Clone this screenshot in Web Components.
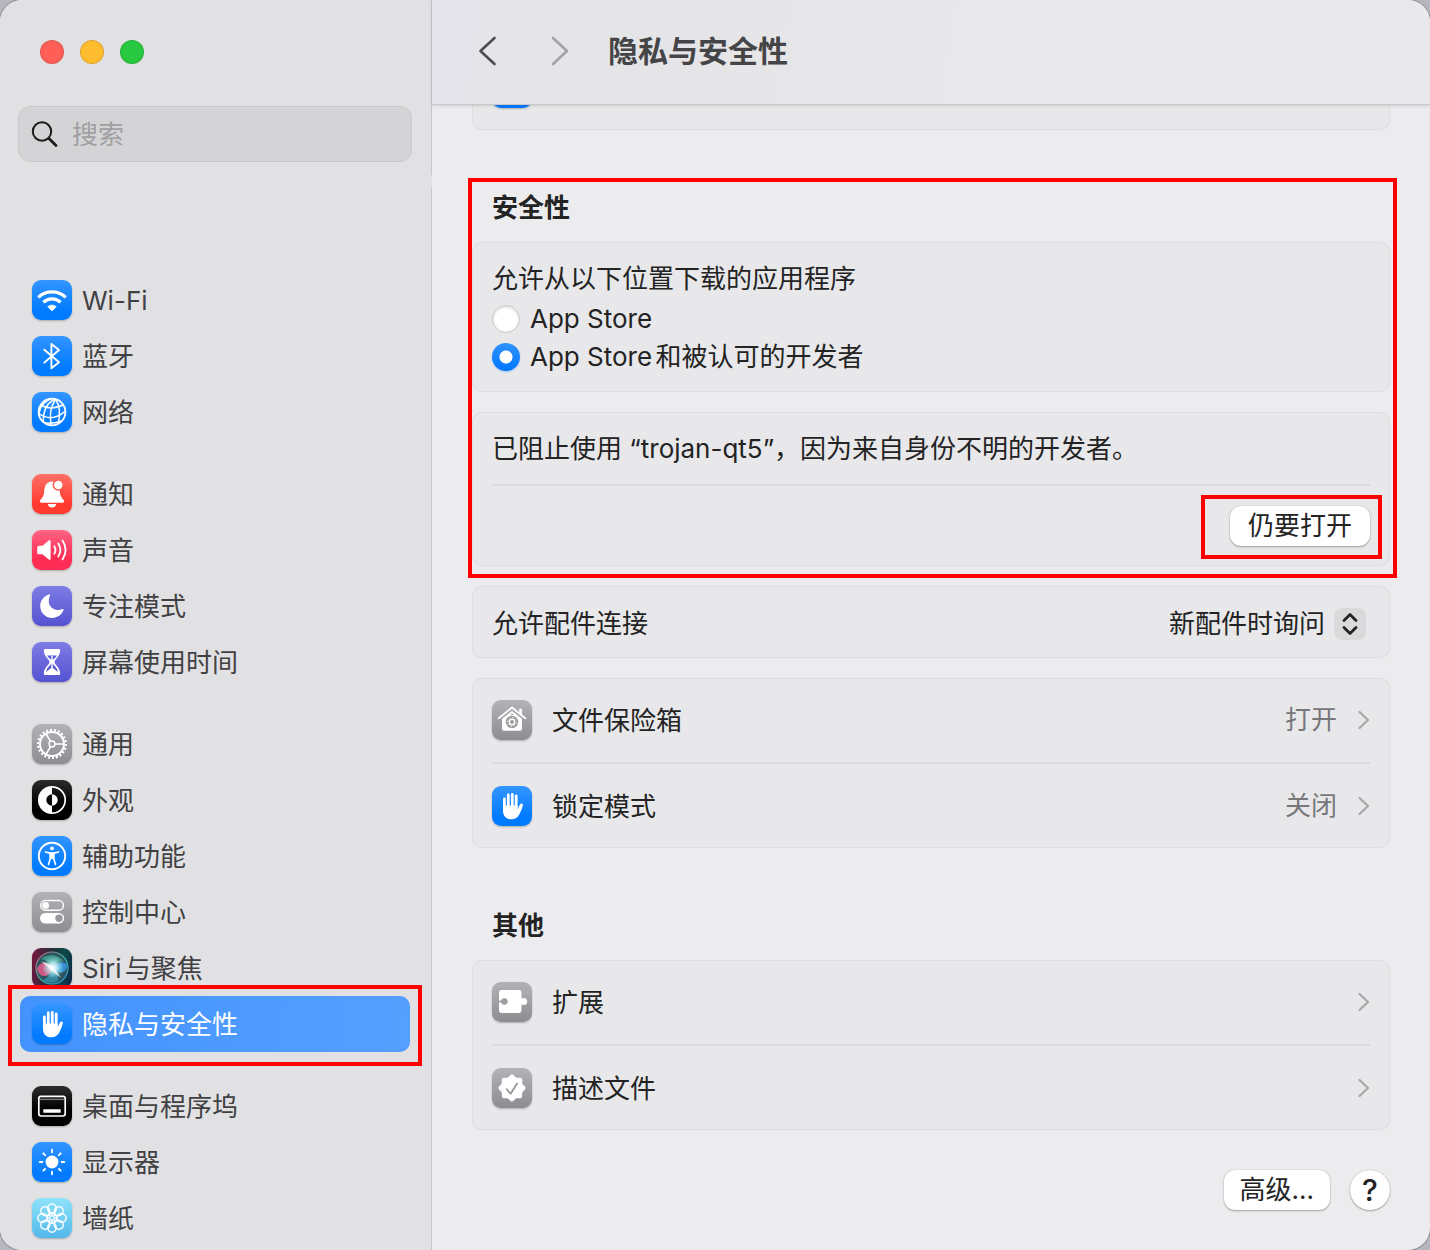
<!DOCTYPE html>
<html lang="zh-CN">
<head>
<meta charset="utf-8">
<meta name="viewport" content="width=device-width, initial-scale=1">
<title>隐私与安全性</title>
<style>
    body {
        margin: 0;
        background: #b6b6be;
        font-family: Inter, "Noto Sans CJK SC", sans-serif;
        font-size: 26px;
        line-height: 36px;
        text-autospace: normal;
        color: #232324;
    }
</style>
</head>
<body>
<settings-window>
    <settings-sidebar slot="sidebar">
        <sidebar-group>
            <sidebar-item icon="wifi">Wi-Fi</sidebar-item>
            <sidebar-item icon="bluetooth">蓝牙</sidebar-item>
            <sidebar-item icon="network">网络</sidebar-item>
        </sidebar-group>
        <sidebar-group>
            <sidebar-item icon="bell">通知</sidebar-item>
            <sidebar-item icon="sound">声音</sidebar-item>
            <sidebar-item icon="moon">专注模式</sidebar-item>
            <sidebar-item icon="hourglass">屏幕使用时间</sidebar-item>
        </sidebar-group>
        <sidebar-group>
            <sidebar-item icon="gear">通用</sidebar-item>
            <sidebar-item icon="appearance">外观</sidebar-item>
            <sidebar-item icon="accessibility">辅助功能</sidebar-item>
            <sidebar-item icon="toggles">控制中心</sidebar-item>
            <sidebar-item icon="siri">Siri与聚焦</sidebar-item>
            <mark-frame style="--mark-inset: -11px -12px -14px">
                <sidebar-item icon="hand" selected>隐私与安全性</sidebar-item>
            </mark-frame>
        </sidebar-group>
        <sidebar-group>
            <sidebar-item icon="dock">桌面与程序坞</sidebar-item>
            <sidebar-item icon="display">显示器</sidebar-item>
            <sidebar-item icon="wallpaper">墙纸</sidebar-item>
        </sidebar-group>
    </settings-sidebar>

    <title-bar slot="toolbar">隐私与安全性</title-bar>

    <clipped-card icon="hand"></clipped-card>

    <mark-frame style="--mark-inset: 48px -7px -12px -4px">
        <section-title>安全性</section-title>
        <card-stack>
            <download-source></download-source>
            <settings-card>
                <settings-row plain>已阻止使用 “trojan-qt5”，因为来自身份不明的开发者。</settings-row>
                <settings-row plain tall>
                    <mark-frame slot="value" style="--mark-inset: -11px -12px -13px -29px">
                        <push-button>仍要打开</push-button>
                    </mark-frame>
                </settings-row>
            </settings-card>
        </card-stack>
    </mark-frame>

    <card-stack class="after">
        <accessory-card></accessory-card>
        <settings-card>
            <settings-row icon="vault" link>文件保险箱<span slot="value">打开</span></settings-row>
            <settings-row icon="hand" link>锁定模式<span slot="value">关闭</span></settings-row>
        </settings-card>
    </card-stack>

    <section-title>其他</section-title>
    <settings-card>
        <settings-row icon="puzzle" link>扩展</settings-row>
        <settings-row icon="seal" link>描述文件</settings-row>
    </settings-card>

    <footer-bar>
        <push-button>高级…</push-button>
        <push-button round label="帮助">?</push-button>
    </footer-bar>
</settings-window>

<script>
const BLUE = 'linear-gradient(#3395ff, #007aff 80%)';
const GRAY = 'linear-gradient(#b2b2b7, #8c8c91)';
const BLACK = 'linear-gradient(#2c2c2c, #000 60%)';
const INDIGO = 'linear-gradient(#7e7ce6, #5552d0)';

const rays = (n, draw) => Array.from({ length: n }, (_, i) =>
    `<g transform="rotate(${i * 360 / n} 20 20)">${draw}</g>`).join('');

// every glyph is drawn on a 40x40 tile, white by default
const ICONS = {
    wifi: [BLUE, `
        <g fill="none" stroke="#fff" stroke-width="3.3"><path d="M6.3 17.4A20 20 0 0 1 33.7 17.4"/><path d="M11.4 22.3A12.6 12.6 0 0 1 28.6 22.3"/></g>
        <path d="M20 31l-4.3-4.3A6.4 6.4 0 0 1 24.3 26.7z" stroke="#fff" stroke-linejoin="round" stroke-width=".6"/>`],
    bluetooth: [BLUE, `<path d="M12.3 13.7L27 26.3l-7.6 6V7.9L27 14 12.3 26.6" fill="none" stroke="#fff" stroke-width="1.9" stroke-linejoin="round" stroke-linecap="round"/>`],
    network: [BLUE, `
        <g fill="none" stroke="#fff" stroke-width="1.5"><circle cx="20" cy="20" r="13.4" stroke-width="1.8"/>
        <path d="M23.5 7Q11 12 11.3 30M23.5 7Q16 19 19.3 33.4M23.5 7Q30 17 26 32M20 6.6Q9 10 7 21M8.8 13Q18 19 31.5 12.8M6.8 21.5Q20 31 33.4 19M11 30Q19 33 29 29"/></g>`],
    bell: ['linear-gradient(#ff7067, #ff3b30 75%)', `
        <path d="M20 7.6C14 7.8 12.6 12.5 12.2 17.5c-.3 4.5-1.7 6-3.7 8.3-1.2 1.6-.6 2.9 1.1 2.9h20.8c1.7 0 2.3-1.3 1.1-2.9-2-2.3-3.4-3.8-3.7-8.3C27.4 12.5 26 7.8 20 7.6z"/>
        <path d="M16 30h8a4 3.4 0 0 1-8 0z"/>
        <circle cx="26.3" cy="11" r="5" stroke="#ff5f56" stroke-width="1.6"/>`],
    sound: ['linear-gradient(#ff6482, #ff2d55 70%)', `
        <path d="M5.2 17.6q0-1.9 1.9-1.9h3.4l6.3-5.3q1.8-1 1.8 1v17.2q0 2-1.8 1l-6.3-5.3H7.1q-1.9 0-1.9-1.9z"/>
        <path d="M22.3 16.2q2.3 3.8 0 7.6M26.3 13.5q4.2 6.5 0 13M30.5 10.6q6.2 9.4 0 18.8" fill="none" stroke="#fff" stroke-width="1.8" stroke-linecap="round"/>`],
    moon: [INDIGO, `<path d="M17 8.4C11.5 10.2 8.2 14.8 8.2 20a12 12 0 0 0 12 12c5.2 0 9.7-3.3 11.3-7.9.3-.9-.2-1.4-1-1C21.5 26.5 13.7 19.5 17.9 9.5c.3-.8-.1-1.3-.9-1.1z"/>`],
    hourglass: [INDIGO, `
        <path d="M13 7h14q1.400 0 1.200 1.700C27.500 15.500 22.500 17 22.500 20s5 4.500 5.700 11.300Q28.400 33 27 33H13q-1.400 0-1.200-1.700C12.500 24.500 17.500 23 17.500 20s-5-4.500-5.700-11.300Q11.600 7 13 7z"/>
        <path d="M15 13.5h10c-1 1.600-2.500 2.800-3.500 4h-3C17.500 16.300 16 15.100 15 13.500zM20 20.500c1.500 3 5 4.500 6 9.500l-6-4.500-6 4.500c1-5 4.500-6.500 6-9.500z" fill="#5f5cd6"/>
        <path d="M19.3 14h1.4v13h-1.4z"/>`],
    gear: [GRAY, `
        <g fill="none" stroke="#fff"><circle cx="20" cy="20" r="13.9" stroke-width="2.3" pathLength="44" stroke-dasharray="1 1"/>
        <circle cx="20" cy="20" r="12" stroke-width="1.9"/><circle cx="20" cy="20" r="2.9" stroke-width="1.5"/>
        <path d="M23 20h8.5M18.5 17.4L14.2 10M18.5 22.6L14.2 30" stroke-width="1.7"/></g>`],
    appearance: [BLACK, `
        <circle cx="20" cy="20" r="13.2" fill="none" stroke="#fff" stroke-width="1.7"/>
        <path d="M20 7a13 13 0 0 0 0 26v-7.3a5.7 5.7 0 0 1 0-11.4z"/><path d="M20 14.3a5.7 5.7 0 0 1 0 11.4z"/>`],
    accessibility: [BLUE, `
        <circle cx="20" cy="20" r="13.2" fill="none" stroke="#fff" stroke-width="1.9"/><circle cx="20" cy="12.3" r="1.9"/>
        <path d="M13.5 16l4.5 1.1h4L26.5 16M18.3 17.2v5.3L16.5 28.5M21.7 17.2v5.3l1.8 6" fill="none" stroke="#fff" stroke-width="1.6" stroke-linecap="round" stroke-linejoin="round"/><path d="M17.6 16.7h4.8v6.3h-4.8z"/>`],
    toggles: [GRAY, `
        <rect x="8.8" y="8.6" width="22.6" height="9.6" rx="4.8" fill="none" stroke="#fff" stroke-width="1.5"/><circle cx="13.7" cy="13.4" r="3.4"/>
        <rect x="8" y="21" width="24.2" height="10.6" rx="5.3"/><circle cx="27" cy="26.3" r="3.7" fill="#98989d"/>`],
    siri: ['linear-gradient(100deg, #7a1540, #1a3138 50%, #0d4a49 70%, #0f2447)', `
        <defs><radialGradient id="orb"><stop offset="0" stop-color="#fff"/><stop offset=".35" stop-color="#d5f6ff" stop-opacity=".85"/><stop offset="1" stop-color="#8fe" stop-opacity="0"/></radialGradient>
        <linearGradient id="ring" x1="0" y1="0" x2="1" y2="1"><stop offset="0" stop-color="#e8447c"/><stop offset=".5" stop-color="#39c0a0"/><stop offset="1" stop-color="#2f8cf0"/></linearGradient></defs>
        <circle cx="20" cy="20" r="16" fill="#2a5560" stroke="url(#ring)" stroke-width="1.2"/>
        <path d="M9 11c7-6 18-5 23 3-5-2-9 1-12 5-2-4-6-7-11-8z" fill="#4fae98" opacity=".75"/>
        <path d="M5 21c3-9 12-7 16-2-2 9-12 14-16 2z" fill="#ec5a8c" opacity=".85"/>
        <path d="M20 19c6-6 13-6 15-2 0 9-9 10-15 2z" fill="#3c9bf0" opacity=".8"/>
        <path d="M20 20c5 1 7 7 6 13-5 3-11 2-15-1 4-2 8-6 9-12z" fill="#3fa5c8" opacity=".6"/>
        <circle cx="21" cy="19.5" r="11" fill="url(#orb)"/>
        <path d="M9 13l12 5 8 12-10-8z" fill="#fff" opacity=".75"/>`],
    hand: [BLUE, `
        <path d="M12.4 13v9M16.3 9v11M20.3 8.3V20M24.2 9.8V21" stroke="#fff" stroke-width="2.8" stroke-linecap="round"/>
        <path d="M11 19.5h14.6V23l2.5-4.7c.8-1.5 3.2-1 2.7 1.1-.8 3.2-2 6-3.3 8.5-1.9 3.7-4.5 5.3-8.1 5.3-5.4 0-8.4-3.4-8.4-8.8z"/>`],
    dock: [BLACK, `
        <rect x="6.8" y="10.3" width="26.4" height="19.7" rx="2.2" fill="none" stroke="#fff" stroke-width="1.7"/>
        <path d="M8 13.3h24" stroke="#999" stroke-width="1"/><rect x="11.3" y="23.2" width="17.4" height="3.6" rx=".6"/>`],
    display: [BLUE, `<circle cx="20" cy="20" r="6.4"/>` + rays(8, '<path d="M20 7.7v2.6" stroke="#fff" stroke-width="1.9" stroke-linecap="round"/>')],
    wallpaper: ['linear-gradient(#8fe3fb, #52b7ea)', rays(8, '<ellipse cx="20" cy="10.6" rx="4.2" ry="4.8" fill="none" stroke="#fff" stroke-width="1.5"/><path d="M20 18.5V14" stroke="#fff" stroke-width="1.6"/>') + '<circle cx="20" cy="20" r="4.6" fill="none" stroke="#fff" stroke-width="1"/>'],
    vault: [GRAY, `
        <path d="M6.7 18.3L20 7.5l13.3 10.8" fill="none" stroke="#fff" stroke-width="1.8" stroke-linecap="round" stroke-linejoin="round"/>
        <path d="M27.2 8.8h2.7v7l-2.7-2.2zM10 18.8L20 10.9l10 7.9v10q0 2-2 2H12q-2 0-2-2z"/>
        <circle cx="20" cy="22" r="6.2" fill="#98989d"/><circle cx="20" cy="22" r="2.7" fill="none" stroke="#fff" stroke-width="1.6"/>
        <circle cx="20" cy="22" r="4.6" fill="none" stroke="#e4e4e6" stroke-width="1" pathLength="16" stroke-dasharray="1 1"/>
        <path d="M20 12.900l1.300 2h-2.600z" fill="#98989d"/>`],
    puzzle: [GRAY, `
        <rect x="7" y="8" width="22.5" height="23" rx="2.4"/><circle cx="31.7" cy="19.5" r="3.5"/><path d="M28 18h3v3h-3z"/>
        <circle cx="12.4" cy="19.5" r="3.3" fill="#9e9ea3"/><path d="M6.5 18.600h4v1.800h-4z" fill="#9e9ea3"/>`],
    seal: [GRAY, `
        <g stroke="#fff" stroke-width="2.4" stroke-linejoin="round"><rect x="11" y="11" width="18" height="18" rx="1"/><rect x="11" y="11" width="18" height="18" rx="1" transform="rotate(45 20 20)"/></g>
        <path d="M14.7 21.2l3.9 4.5 6.5-10.3" fill="none" stroke="#98989d" stroke-width="1.8" stroke-linecap="round" stroke-linejoin="round"/>`]
};

// base class: clones markup into an open shadow root
class Part extends HTMLElement {
    constructor() {
        super();
        this.attachShadow({ mode: 'open' });
    }
    connectedCallback() {
        if (this.shadowRoot.childNodes.length) return;
        const template = document.createElement('template');
        template.innerHTML = this.markup();
        this.shadowRoot.appendChild(template.content.cloneNode(true));
    }
}

class AppIcon extends Part {
    markup() {
        const [background, glyph] = ICONS[this.getAttribute('name')];
        return `
<style>
    :host {
        display: block;
        flex: none;
        width: 40px;
        height: 40px;
        border-radius: 9px;
        background: ${background};
        box-shadow: 0 1px 2px rgba(0, 0, 0, 0.25);
    }
    svg {
        display: block;
    }
</style>
<svg width="40" height="40" viewBox="0 0 40 40" fill="#fff" aria-hidden="true">${glyph}</svg>`;
    }
}
customElements.define('app-icon', AppIcon);

class MarkFrame extends Part {
    markup() {
        return `
<style>
    :host {
        display: block;
        position: relative;
    }
    :host::after {
        content: "";
        position: absolute;
        z-index: 2;
        inset: var(--mark-inset);
        border: 4px solid #f00;
        pointer-events: none;
    }
</style>
<slot></slot>`;
    }
}
customElements.define('mark-frame', MarkFrame);

class SettingsWindow extends Part {
    markup() {
        return `
<style>
    :host {
        display: grid;
        grid-template-columns: 432px 1fr;
        min-height: 100vh;
        border-radius: 22px;
        overflow: hidden;
        background: #ececee;
        box-shadow: 0 0 0 1px #8e8e94;
    }
    main {
        padding: 0 40px 40px;
    }
</style>
<slot name="sidebar"></slot>
<div>
    <slot name="toolbar"></slot>
    <main><slot></slot></main>
</div>`;
    }
}
customElements.define('settings-window', SettingsWindow);

class SettingsSidebar extends Part {
    markup() {
        return `
<style>
    :host {
        display: flex;
        flex-direction: column;
        gap: 12px;
        background: #e1e1e3;
        color: #414143;
    }
    header, nav {
        border-right: 1px solid #c8c8ca;
    }
    header {
        padding: 40px 19px 13px 18px;
    }
    .lights {
        display: flex;
        gap: 16px;
        padding: 0 22px;
        margin-bottom: 42px;
    }
    .lights button {
        width: 24px;
        height: 24px;
        padding: 0;
        border: 1px solid rgba(0, 0, 0, 0.12);
        border-radius: 50%;
    }
    .close { background: #ff5f57; }
    .minimize { background: #febc2e; }
    .zoom { background: #28c840; }
    label {
        display: flex;
        align-items: center;
        gap: 13px;
        box-sizing: border-box;
        height: 56px;
        padding: 0 12px;
        border: 1px solid #c9c9cb;
        border-radius: 12px;
        background: #d4d4d6;
    }
    svg {
        flex: none;
    }
    input {
        flex: 1;
        min-width: 0;
        padding: 2px 0 0;
        border: 0;
        outline: 0;
        background: none;
        font: inherit;
        color: #232324;
    }
    input::placeholder {
        color: #a0a0a3;
    }
    nav {
        flex: 1;
        display: flex;
        flex-direction: column;
        gap: 26px;
        padding: 85px 21px 4px 20px;
    }
</style>
<header>
    <div class="lights">
        <button class="close" aria-label="关闭窗口"></button>
        <button class="minimize" aria-label="最小化"></button>
        <button class="zoom" aria-label="缩放"></button>
    </div>
    <label>
        <svg width="28" height="28" viewBox="0 0 28 28" fill="none" stroke="#1c1c1c" stroke-linecap="round" aria-hidden="true"><circle cx="11" cy="11.5" r="9.2" stroke-width="2"/><path d="M18 18.5l7 7" stroke-width="2.8"/></svg>
        <input type="text" placeholder="搜索" aria-label="搜索">
    </label>
</header>
<nav><slot></slot></nav>`;
    }
}
customElements.define('settings-sidebar', SettingsSidebar);

class SidebarGroup extends Part {
    markup() {
        return `
<style>
    :host {
        display: flex;
        flex-direction: column;
    }
</style>
<slot></slot>`;
    }
}
customElements.define('sidebar-group', SidebarGroup);

class SidebarItem extends Part {
    markup() {
        return `
<style>
    :host {
        display: block;
    }
    a {
        display: flex;
        align-items: center;
        gap: 10px;
        height: 56px;
        padding: 0 12px;
        border-radius: 10px;
        color: inherit;
        text-decoration: none;
    }
    span {
        padding-top: 2px;
    }
    :host([selected]) a {
        background: linear-gradient(100deg, #4393ff, #559fff);
        color: #fff;
    }
</style>
<a href="#"><app-icon name="${this.getAttribute('icon')}"></app-icon><span><slot></slot></span></a>`;
    }
}
customElements.define('sidebar-item', SidebarItem);

class TitleBar extends Part {
    markup() {
        return `
<style>
    :host {
        display: flex;
        align-items: center;
        box-sizing: border-box;
        height: 105px;
        padding: 0 36px 2px;
        border-bottom: 1px solid #c9c9cc;
        background: linear-gradient(100deg, #e4e5eb, #e5e5e7 25%, #e9e9eb 60%);
        box-shadow: 0 1px 3px rgba(0, 0, 0, 0.12);
        position: relative;
        z-index: 1;
    }
    .history {
        display: flex;
        gap: 32px;
        margin-right: 28px;
    }
    button {
        width: 40px;
        height: 40px;
        padding: 0;
        border: 0;
        background: none;
        color: #4d4d51;
    }
    button:disabled {
        color: #a3a3a7;
    }
    svg {
        display: block;
    }
    h1 {
        margin: 0;
        font-size: 30px;
        font-weight: 700;
        line-height: 40px;
        color: #454547;
    }
</style>
<div class="history">
    <button aria-label="后退"><svg width="40" height="40" viewBox="0 0 40 40" fill="none" stroke="currentColor" stroke-width="2.6" stroke-linecap="round" stroke-linejoin="round"><path d="M26.500 7L12.500 20l14 13"/></svg></button>
    <button aria-label="前进" disabled><svg width="40" height="40" viewBox="0 0 40 40" fill="none" stroke="currentColor" stroke-width="2.6" stroke-linecap="round" stroke-linejoin="round"><path d="M13 7l14 13-14 13"/></svg></button>
</div>
<h1><slot></slot></h1>`;
    }
}
customElements.define('title-bar', TitleBar);

class SectionTitle extends Part {
    markup() {
        return `
<style>
    :host {
        display: block;
        padding: 60px 20px 16px;
    }
    h2 {
        margin: 0;
        font: inherit;
        font-weight: 700;
    }
</style>
<h2><slot></slot></h2>`;
    }
}
customElements.define('section-title', SectionTitle);

class CardStack extends Part {
    markup() {
        return `
<style>
    :host {
        display: flex;
        flex-direction: column;
        gap: 20px;
    }
    :host(.after) {
        margin-top: 20px;
    }
</style>
<slot></slot>`;
    }
}
customElements.define('card-stack', CardStack);

class SettingsCard extends Part {
    markup() {
        return `
<style>
    :host {
        display: block;
        padding: 0 20px;
        border-radius: 10px;
        background: #e8e8ea;
        box-shadow: inset 0 0 0 1px #dddde0;
    }
    ::slotted(settings-row:not(:first-child)) {
        border-top: 2px solid #dcdcde;
    }
</style>
<slot></slot>`;
    }
}
customElements.define('settings-card', SettingsCard);

// last card of the list that is scrolled under the title bar
class ClippedCard extends Part {
    markup() {
        return `
<style>
    :host {
        display: flex;
        align-items: flex-end;
        box-sizing: border-box;
        height: 25px;
        overflow: hidden;
        padding: 0 19px 21px;
        border: 1px solid #dddde0;
        border-top: 0;
        border-radius: 0 0 10px 10px;
        background: #e8e8ea;
    }
</style>
<app-icon name="${this.getAttribute('icon')}"></app-icon>`;
    }
}
customElements.define('clipped-card', ClippedCard);

class SettingsRow extends Part {
    markup() {
        const icon = this.getAttribute('icon');
        const link = this.hasAttribute('link');
        const tag = link ? 'a href="#"' : 'div';
        return `
<style>
    :host {
        display: block;
    }
    .row {
        display: flex;
        align-items: center;
        gap: 20px;
        height: 84px;
        color: inherit;
        text-decoration: none;
    }
    :host([plain]) .row {
        height: 72px;
    }
    :host([tall]) .row {
        height: 80px;
    }
    .text {
        flex: 1;
        padding-top: 2px;
    }
    .value {
        color: #77777a;
    }
    .chevron {
        flex: none;
    }
</style>
<${tag} class="row">
    ${icon ? `<app-icon name="${icon}"></app-icon>` : ''}
    <span class="text"><slot></slot></span>
    <span class="value"><slot name="value"></slot></span>
    ${link ? '<svg class="chevron" width="13" height="20" viewBox="0 0 13 20" fill="none" stroke="#a9a9ac" stroke-width="2.4" stroke-linecap="round" stroke-linejoin="round" aria-hidden="true"><path d="M2.500 2l8.500 8-8.500 8"/></svg>' : ''}
</${link ? 'a' : 'div'}>`;
    }
}
customElements.define('settings-row', SettingsRow);

class DownloadSource extends Part {
    markup() {
        return `
<style>
    :host {
        display: block;
        padding: 18px 20px 16px;
        border-radius: 10px;
        background: #e8e8ea;
        box-shadow: inset 0 0 0 1px #dddde0;
    }
    fieldset {
        margin: 0;
        padding: 0;
        border: 0;
        line-height: 38px;
    }
    legend {
        padding: 0;
        margin-bottom: 2px;
    }
    .option {
        display: flex;
        align-items: center;
        gap: 10px;
    }
    input {
        appearance: none;
        flex: none;
        box-sizing: border-box;
        width: 28px;
        height: 28px;
        margin: 0;
        border: 1px solid #c9c9cb;
        border-radius: 50%;
        background: #fff;
        box-shadow: inset 0 1px 3px rgba(0, 0, 0, 0.16);
    }
    input:checked {
        border: 0;
        background: radial-gradient(circle, #fff 6px, transparent 7px), linear-gradient(#2f92ff, #0077ff);
        box-shadow: 0 1px 2px rgba(0, 122, 255, 0.3);
    }
</style>
<fieldset>
    <legend>允许从以下位置下载的应用程序</legend>
    <div class="option"><input type="radio" name="source" id="store"><label for="store">App Store</label></div>
    <div class="option"><input type="radio" name="source" id="identified" checked><label for="identified">App Store和被认可的开发者</label></div>
</fieldset>`;
    }
}
customElements.define('download-source', DownloadSource);

class AccessoryCard extends Part {
    markup() {
        return `
<style>
    :host {
        display: flex;
        align-items: center;
        justify-content: space-between;
        box-sizing: border-box;
        height: 72px;
        padding: 4px 24px 0 20px;
        border-radius: 10px;
        background: #e8e8ea;
        box-shadow: inset 0 0 0 1px #dddde0;
    }
    .popup {
        display: grid;
        align-items: center;
    }
    select, svg {
        grid-area: 1 / 1;
    }
    select {
        appearance: none;
        padding: 0 40px 0 0;
        border: 0;
        background: none;
        font: inherit;
        color: inherit;
    }
    svg {
        justify-self: end;
        border-radius: 8px;
        background: #dadadc;
        pointer-events: none;
    }
</style>
<label for="accessory">允许配件连接</label>
<div class="popup">
    <select id="accessory"><option>新配件时询问</option></select>
    <svg width="32" height="32" viewBox="0 0 32 32" fill="none" stroke="#232324" stroke-width="2.8" stroke-linecap="round" stroke-linejoin="round" aria-hidden="true"><path d="M10 12.500l6-6 6 6M10 19.500l6 6 6-6"/></svg>
</div>`;
    }
}
customElements.define('accessory-card', AccessoryCard);

class PushButton extends Part {
    markup() {
        const label = this.getAttribute('label');
        return `
<style>
    :host {
        display: block;
    }
    button {
        display: block;
        height: 40px;
        padding: 0 16px;
        border: 0;
        border-radius: 11px;
        background: #fff;
        box-shadow: 0 0 1px rgba(0, 0, 0, 0.3), 0 1px 2px rgba(0, 0, 0, 0.3);
        font: inherit;
        color: #232324;
    }
    :host([slot]) button,
    :host(:only-child) button {
        min-width: 140px;
    }
    :host([round]) button {
        width: 40px;
        padding: 0;
        border-radius: 50%;
        font-size: 30px;
        font-weight: 500;
    }
</style>
<button${label ? ` aria-label="${label}"` : ''}><slot></slot></button>`;
    }
}
customElements.define('push-button', PushButton);

class FooterBar extends Part {
    markup() {
        return `
<style>
    :host {
        display: flex;
        justify-content: flex-end;
        gap: 20px;
        margin-top: 40px;
    }
</style>
<slot></slot>`;
    }
}
customElements.define('footer-bar', FooterBar);
</script>
</body>
</html>
